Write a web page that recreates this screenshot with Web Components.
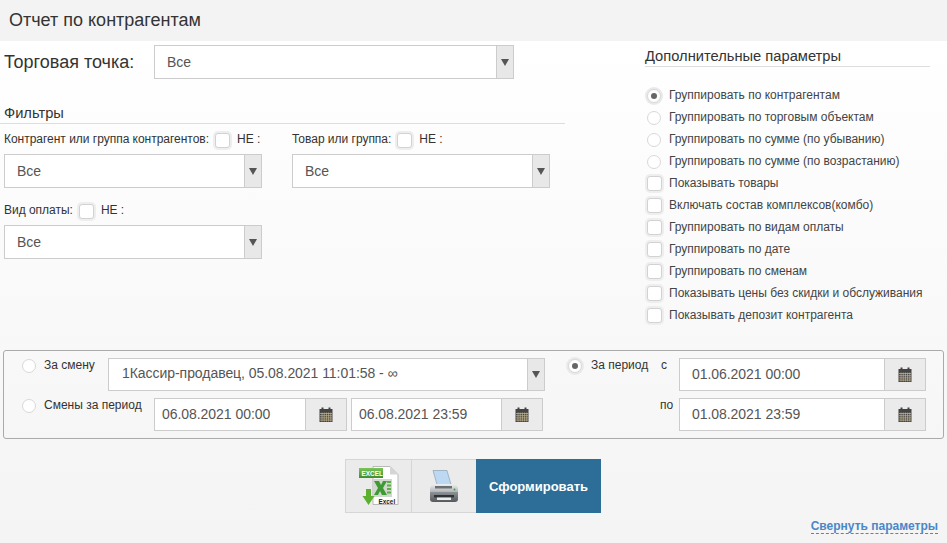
<!DOCTYPE html>
<html lang="ru">
<head>
<meta charset="utf-8">
<title>Отчет по контрагентам</title>
<style>
    html, body { margin: 0; height: 100%; }
    body {
        font-family: "Liberation Sans", Arial, sans-serif;
        color: #333;
        background: linear-gradient(#fff 41px, #f4f4f4 100%);
        overflow: hidden;
    }
</style>
</head>
<body>
<report-page></report-page>

<script>
class UiSelect extends HTMLElement {
    constructor() {
        super();
        this.attachShadow({ mode: "open" });
        this.shadowRoot.innerHTML = `
            <style>
                :host { display: flex; height: 34px; box-sizing: border-box; border: 1px solid #ccc; background: #fff; }
                .val { flex: 1; padding-left: var(--pad, 12px); line-height: var(--lh, 32px); font-size: 14px; letter-spacing: var(--ls, 0); color: #555; white-space: nowrap; overflow: hidden; }
                .btn { width: 16px; background: #e8e8e8; border-left: 1px solid #ccc; display: flex; align-items: center; justify-content: center; }
                .btn i { width: 0; height: 0; border: 4.5px solid transparent; border-top: 7px solid #555; border-bottom: 0; }
            </style>
            <div class="val"><slot></slot></div>
            <div class="btn"><i></i></div>
        `;
    }
}
customElements.define("ui-select", UiSelect);

class UiCheck extends HTMLElement {
    constructor() {
        super();
        this.attachShadow({ mode: "open" });
        this.shadowRoot.innerHTML = `
            <style>
                :host { display: inline-block; flex: none; width: 15px; height: 15px; box-sizing: border-box; background: #fff; border: 1px solid #d2d2d2; border-radius: 3px; box-shadow: 0 0 0 2px #eee; }
            </style>
        `;
    }
}
customElements.define("ui-check", UiCheck);

class UiRadio extends HTMLElement {
    constructor() {
        super();
        this.attachShadow({ mode: "open" });
        this.shadowRoot.innerHTML = `
            <style>
                :host { display: inline-flex; flex: none; align-items: center; justify-content: center; width: 14px; height: 14px; box-sizing: border-box; background: #fff; border: 1px solid #d8d8d8; border-radius: 50%; }
                :host([checked]) { box-shadow: 0 0 0 2px #e9e9e9; }
                i { display: none; width: 6px; height: 6px; border-radius: 50%; background: #666; }
                :host([checked]) i { display: block; }
            </style>
            <i></i>
        `;
    }
}
customElements.define("ui-radio", UiRadio);

class UiDate extends HTMLElement {
    constructor() {
        super();
        this.attachShadow({ mode: "open" });
        this.shadowRoot.innerHTML = `
            <style>
                :host { display: flex; height: 33px; box-sizing: border-box; border: 1px solid #ccc; background: #fff; }
                .val { flex: 1; padding-left: var(--pad, 7px); line-height: 30px; font-size: 14px; letter-spacing: -0.05px; color: #555; white-space: nowrap; }
                .btn { width: 40px; background: #ebebeb; border-left: 1px solid #ccc; display: flex; align-items: center; justify-content: center; }
            </style>
            <div class="val"><slot></slot></div>
            <div class="btn">
                <svg width="14" height="15" viewBox="0 0 14 15">
                    <rect x="0.5" y="2" width="13" height="13" fill="#444"/>
                    <rect x="2.5" y="0.5" width="2" height="3" fill="#444"/>
                    <rect x="9.5" y="0.5" width="2" height="3" fill="#444"/>
                    <path d="M1 6.5h12M1 8.7h12M1 10.9h12M1 13.1h12M3 5.5v9M5.2 5.5v9M7.4 5.5v9M9.6 5.5v9M11.8 5.5v9" stroke="#c9b98f" stroke-width="0.7" fill="none"/>
                </svg>
            </div>
        `;
    }
}
customElements.define("ui-date", UiDate);

class FilterField extends HTMLElement {
    constructor() {
        super();
        this.attachShadow({ mode: "open" });
        this.shadowRoot.innerHTML = `
            <style>
                :host { display: block; }
                .lbl { display: flex; align-items: center; height: 30px; font-size: 12px; letter-spacing: -0.02px; color: #333; white-space: nowrap; }
                ui-check { margin: 2px 7px 0 6px; }
                ui-select { --pad: 12px; }
            </style>
            <div class="lbl"><span id="t"></span><ui-check></ui-check><span>НЕ :</span></div>
            <ui-select>Все</ui-select>
        `;
    }
    connectedCallback() {
        this.shadowRoot.querySelector("#t").textContent = this.getAttribute("label");
    }
}
customElements.define("filter-field", FilterField);

class OptionRow extends HTMLElement {
    constructor() {
        super();
        this.attachShadow({ mode: "open" });
        this.shadowRoot.innerHTML = `
            <style>
                :host { display: flex; align-items: center; height: 22px; font-size: 12px; color: #444; white-space: nowrap; padding-left: 2px; }
                .box { display: flex; width: 22px; margin-top: 1px; }
                span { margin-top: -1px; }
            </style>
            <div class="box"><slot name="mark"></slot></div>
            <span><slot></slot></span>
        `;
    }
}
customElements.define("option-row", OptionRow);

class PeriodPanel extends HTMLElement {
    constructor() {
        super();
        this.attachShadow({ mode: "open" });
        this.shadowRoot.innerHTML = `
            <style>
                :host { display: grid; grid-template-columns: 523px 358px; column-gap: 23px; margin: 0 3px; height: 89px; box-sizing: border-box; padding: 7px 17px 7px 18px; border: 1px solid #aaa; border-radius: 3px; font-size: 12px; color: #333; }
                .col { display: flex; flex-direction: column; gap: 7px; }
                .row { display: flex; align-items: flex-start; height: 33px; white-space: nowrap; }
                ui-radio { margin: 1px 8px 0 0; }
                .t { line-height: 14px; }
                .shift { width: 64px; }
                .range { width: 110px; }
                .sel { width: 437px; height: 33px; --pad: 13px; --lh: 29px; --ls: -0.05px; }
                .d1 { width: 193px; --pad: 7px; }
                .d2 { width: 192px; margin-left: 4px; --pad: 7px; }
                .per { width: 70px; margin-left: 1px; }
                .s { width: 18px; }
                .po { width: 19px; margin-left: 92px; }
                .d3 { width: 247px; --pad: 12px; }
            </style>
            <div class="col">
                <div class="row">
                    <ui-radio></ui-radio><span class="t shift">За смену</span>
                    <ui-select class="sel">1Кассир-продавец, 05.08.2021 11:01:58 - ∞</ui-select>
                </div>
                <div class="row">
                    <ui-radio></ui-radio><span class="t range">Смены за период</span>
                    <ui-date class="d1">06.08.2021 00:00</ui-date>
                    <ui-date class="d2">06.08.2021 23:59</ui-date>
                </div>
            </div>
            <div class="col">
                <div class="row">
                    <ui-radio checked></ui-radio><span class="t per">За период</span>
                    <span class="t s">с</span>
                    <ui-date class="d3">01.06.2021 00:00</ui-date>
                </div>
                <div class="row">
                    <span class="t po">по</span>
                    <ui-date class="d3">01.08.2021 23:59</ui-date>
                </div>
            </div>
        `;
    }
}
customElements.define("period-panel", PeriodPanel);

class ActionBar extends HTMLElement {
    constructor() {
        super();
        this.attachShadow({ mode: "open" });
        this.shadowRoot.innerHTML = `
            <style>
                :host { display: flex; justify-content: center; height: 54px; margin-left: -1px; }
                .ico { width: 65px; box-sizing: border-box; background: #ebebeb; border: 1px solid #d6d6d6; border-right: 0; display: flex; align-items: center; justify-content: center; }
                .go { width: 125px; background: #2c6e97; color: #fff; font-size: 13px; font-weight: bold; display: flex; align-items: center; justify-content: center; }
                .ico.first { width: 66px; }
            </style>
            <div class="ico first">
                <svg width="40" height="40" viewBox="0 0 40 40">
                    <defs>
                        <linearGradient id="b" x1="0" y1="0" x2="0" y2="1"><stop offset="0" stop-color="#7cc35a"/><stop offset="1" stop-color="#3f8f2c"/></linearGradient>
                    </defs>
                    <path d="M14 .5h17l8 8v30H14z" fill="#fff" stroke="#aaa" stroke-width="0.8"/>
                    <path d="M31 .5v8h8z" fill="#d5d5d5"/>
                    <rect x="0" y="2" width="24" height="10" fill="url(#b)"/>
                    <text x="2.5" y="9.6" font-family="Liberation Sans" font-size="6.4" font-weight="bold" fill="#fff">EXCEL</text>
                    <rect x="14" y="13" width="19" height="18" fill="#cfd8cb"/>
                    <path d="M15 15h5l2 4 2-4h4l-4 7 4 7h-5l-2-4-2 4h-4l4-7z" fill="#3f9a35"/>
                    <path d="M28 15h4v2h-4zM28 18.500h4v2h-4zM28 22h4v2h-4zM28 25.500h4v2h-4z" fill="#5cae48"/>
                    <path d="M7 23h5v7h3.500l-6 9-6-9H7z" fill="#5cb030"/>
                    <text x="19.500" y="38" font-family="Liberation Sans" font-size="6.400" font-weight="bold" fill="#222">Excel</text>
                </svg>
            </div>
            <div class="ico">
                <svg width="30" height="33" viewBox="0 0 30 33">
                    <defs>
                        <linearGradient id="p" x1="0" y1="0" x2="0" y2="1"><stop offset="0" stop-color="#eef0f1"/><stop offset="1" stop-color="#a9adb0"/></linearGradient>
                        <linearGradient id="f" x1="0" y1="0" x2="0" y2="1"><stop offset="0" stop-color="#8d9296"/><stop offset="1" stop-color="#55595d"/></linearGradient>
                    </defs>
                    <path d="M4 .5h14l4 14H8z" fill="#bcd8f2" stroke="#7e97aa" stroke-width="0.6"/>
                    <path d="M1 18Q2 14 7 14h16q5 0 6 4v5H1z" fill="url(#p)"/>
                    <path d="M1 22h28v7q0 3-3 3H4q-3 0-3-3z" fill="url(#f)"/>
                    <rect x="6" y="16" width="17" height="2.500" fill="#6a6f73"/>
                    <rect x="5" y="25" width="20" height="2.500" fill="#2f3336"/>
                    <rect x="8" y="27.500" width="14" height="2.500" fill="#e9ebec"/>
                    <circle cx="25.500" cy="19.500" r="1" fill="#39a23a"/>
                </svg>
            </div>
            <div class="go"><slot></slot></div>
        `;
    }
}
customElements.define("action-bar", ActionBar);

class ReportPage extends HTMLElement {
    constructor() {
        super();
        this.attachShadow({ mode: "open" });
        this.shadowRoot.innerHTML = `
            <style>
                :host { display: block; }
                header { height: 41px; background: #f3f3f3; padding-left: 9px; font-size: 18px; line-height: 40px; color: #333; }
                .top { display: grid; grid-template-columns: 565px 285px; column-gap: 80px; height: 309px; }
                .store { display: flex; align-items: center; margin-top: 4px; padding-left: 4px; }
                .store label { width: 150px; font-size: 18px; color: #333; }
                .store ui-select { width: 360px; }
                h3 { margin: 0; font-weight: normal; font-size: 14.7px; line-height: 20px; border-bottom: 1px solid #ddd; color: #333; }
                .filters h3 { margin-top: 24px; padding-left: 4px; }
                .fgrid { display: grid; grid-template-columns: 258px 258px; column-gap: 30px; row-gap: 7px; padding: 0 0 0 4px; }
                .extra h3 { margin: 5px 0 17px; }
                action-bar { margin-top: 20px; }
                .foot { display: flex; justify-content: flex-end; padding: 6px 9px 0 0; }
                a { font-size: 12px; font-weight: bold; color: #4a87c7; border-bottom: 1px dashed #4a87c7; line-height: 14px; text-decoration: none; }
            </style>
            <header>Отчет по контрагентам</header>
            <div class="top">
                <div>
                    <div class="store">
                        <label>Торговая точка:</label>
                        <ui-select>Все</ui-select>
                    </div>
                    <div class="filters">
                        <h3>Фильтры</h3>
                        <div class="fgrid">
                            <filter-field label="Контрагент или группа контрагентов:"></filter-field>
                            <filter-field label="Товар или группа:"></filter-field>
                            <filter-field label="Вид оплаты:"></filter-field>
                        </div>
                    </div>
                </div>
                <div class="extra">
                    <h3>Дополнительные параметры</h3>
                    <option-row><ui-radio slot="mark" checked></ui-radio>Группировать по контрагентам</option-row>
                    <option-row><ui-radio slot="mark"></ui-radio>Группировать по торговым объектам</option-row>
                    <option-row><ui-radio slot="mark"></ui-radio>Группировать по сумме (по убыванию)</option-row>
                    <option-row><ui-radio slot="mark"></ui-radio>Группировать по сумме (по возрастанию)</option-row>
                    <option-row><ui-check slot="mark"></ui-check>Показывать товары</option-row>
                    <option-row><ui-check slot="mark"></ui-check>Включать состав комплексов(комбо)</option-row>
                    <option-row><ui-check slot="mark"></ui-check>Группировать по видам оплаты</option-row>
                    <option-row><ui-check slot="mark"></ui-check>Группировать по дате</option-row>
                    <option-row><ui-check slot="mark"></ui-check>Группировать по сменам</option-row>
                    <option-row><ui-check slot="mark"></ui-check>Показывать цены без скидки и обслуживания</option-row>
                    <option-row><ui-check slot="mark"></ui-check>Показывать депозит контрагента</option-row>
                </div>
            </div>
            <period-panel></period-panel>
            <action-bar>Сформировать</action-bar>
            <div class="foot"><a href="#">Свернуть параметры</a></div>
        `;
    }
}
customElements.define("report-page", ReportPage);
</script>
</body>
</html>
